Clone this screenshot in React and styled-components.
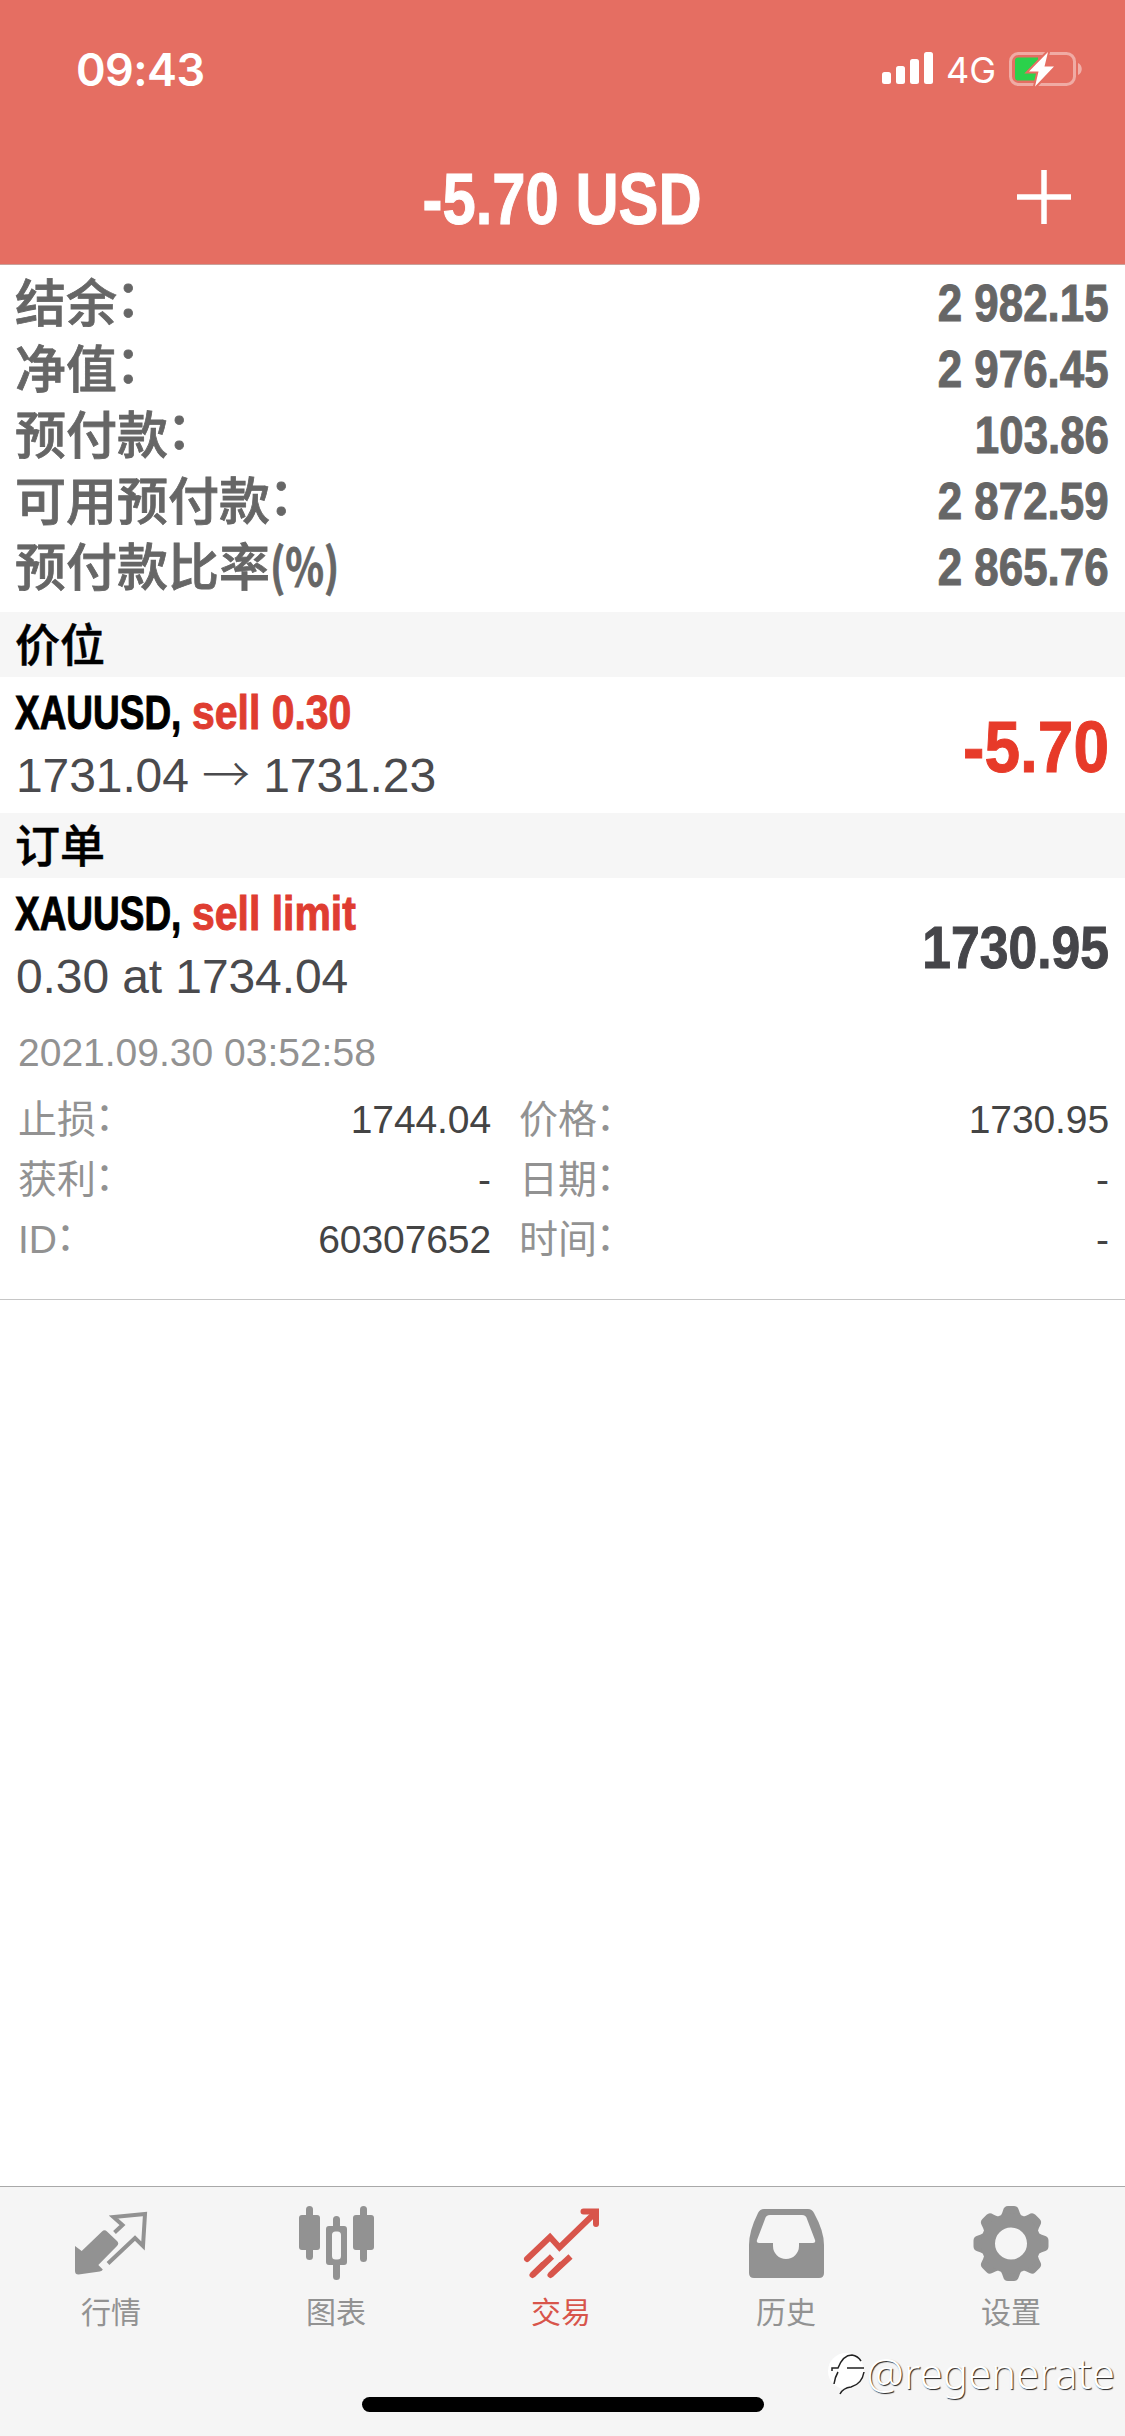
import React from 'react';
import styled, { createGlobalStyle } from 'styled-components';

const sans = "'Liberation Sans', 'Noto Sans CJK SC', sans-serif";
const cjk = "'Noto Sans CJK SC', sans-serif";
const system = "Inter, 'Noto Sans CJK SC', sans-serif";

const GlobalStyle = createGlobalStyle`
  body {
    margin: 0;
    background: #fff;
  }

  svg {
    display: block;
  }
`;

// Bold sans squeezed into a condensed face
const Condensed = styled.span`
  display: inline-block;
  font-weight: 700;
  white-space: nowrap;
  transform: scaleX(${({ $scale }) => $scale});
  transform-origin: ${({ $origin }) => $origin || 'left'} center;
  -webkit-text-stroke: 1px currentColor;
`;

const Screen = styled.div`
  position: relative;
  display: flex;
  flex-direction: column;
  width: 1125px;
  height: 2436px;
  overflow: hidden;
  background: #fff;
  font-family: ${sans};
`;

const Header = styled.header`
  display: flex;
  flex-direction: column;
  box-sizing: border-box;
  height: 265px;
  border-bottom: 1px solid #c9a19b;
  background: #e56e62;
  color: #fff;
`;

const StatusBar = styled.div`
  display: flex;
  align-items: center;
  justify-content: space-between;
  height: 132px;
  padding: 6px 42px 0 76px;
  box-sizing: border-box;
`;

const Clock = styled.span`
  font-family: ${system};
  font-size: 45px;
  font-weight: 600;
  letter-spacing: -0.6px;
`;

const Indicators = styled.div`
  display: flex;
  align-items: center;
`;

const Network = styled.span`
  margin: 2px 13px 0 12px;
  font-family: ${system};
  font-size: 36px;
`;

const NavBar = styled.div`
  display: grid;
  grid-template-columns: 1fr auto 1fr;
  align-items: center;
  height: 132px;
  padding: 0 53px;
`;

const NavTitle = styled.h1`
  grid-column: 2;
  margin: 0;
  padding-top: 3px;
  font-size: 72px;
  line-height: 129px;
`;

const AddButton = styled.button`
  justify-self: end;
  padding: 0;
  border: 0;
  background: none;
`;

const Summary = styled.dl`
  box-sizing: border-box;
  height: 347px;
  margin: 0;
  padding: 5px 16px 0 15px;
  color: #666;
`;

const SummaryRow = styled.div`
  display: flex;
  justify-content: space-between;
  height: 66px;
`;

const SummaryLabel = styled.dt`
  font-family: ${cjk};
  font-size: 51px;
  font-weight: 500;
  line-height: 61px;
  -webkit-text-stroke: 0.8px currentColor;
`;

const Colon = styled.span`
  margin-left: -0.03em;
  line-height: 1;
  vertical-align: 0.09em;
`;

const Unit = styled.span`
  display: inline-block;
  font-weight: 700;
  transform: scaleX(0.79);
  transform-origin: left center;
`;

const SummaryValue = styled.dd`
  margin: 0;
  font-size: 51px;
  line-height: 68px;
`;

const SectionTitle = styled.h2`
  height: 65px;
  margin: 0;
  padding: 0 15px;
  background: #f6f6f6;
  color: #000;
  font-family: ${cjk};
  font-size: 45px;
  font-weight: 500;
  line-height: 62px;
  -webkit-text-stroke: 0.5px currentColor;
`;

const Trade = styled.div`
  display: flex;
  align-items: center;
  justify-content: space-between;
  height: 136px;
  padding: 0 16px 0 15px;
`;

const Order = styled.div`
  display: grid;
  grid-template-columns: 177px auto;
  font-size: 48px;
  line-height: 62px;
`;

const Ticker = styled.span`
  color: #000;
`;

const Side = styled.span`
  color: #df3d31;
`;

const Price = styled.div`
  padding-left: 1px;
  color: #4a4a4d;
  font-size: 48px;
  letter-spacing: -0.1px;
  line-height: 64px;
`;

const Arrow = styled.span`
  font-family: ${cjk};
  font-weight: 300;
  line-height: 1;
`;

const Amount = styled.div`
  padding-top: 3px;
  color: ${({ $loss }) => ($loss ? '#e73a29' : '#454549')};
  font-size: ${({ $loss }) => ($loss ? 72 : 60)}px;
`;

const Details = styled.div`
  box-sizing: border-box;
  height: 286px;
  padding: 9px 16px 0 18px;
  border-bottom: 1px solid #c6c6c6;
  color: #929292;
  font-size: 39px;
`;

const OpenTime = styled.div`
  height: 67px;
  line-height: 60px;
`;

const DetailGrid = styled.div`
  display: grid;
  grid-template-columns: 473px 590px;
  column-gap: 28px;
`;

const Detail = styled.div`
  display: flex;
  justify-content: space-between;
  height: 60px;
  line-height: 60px;
`;

const DetailValue = styled.span`
  color: #444;
  letter-spacing: -0.1px;
`;

const TabBar = styled.nav`
  display: flex;
  box-sizing: border-box;
  height: 250px;
  margin-top: auto;
  border-top: 1px solid #a9a9a9;
  background: #f5f5f5;
`;

const Tab = styled.a`
  display: flex;
  flex: 1;
  flex-direction: column;
  align-items: center;
  padding: 16px 3px 0 0;
  color: ${({ $active }) => ($active ? '#d8554b' : '#929292')};
`;

const TabLabel = styled.span`
  margin-top: 7px;
  font-family: ${cjk};
  font-size: 30px;
  line-height: 40px;
`;

const HomeIndicator = styled.div`
  position: absolute;
  bottom: 24px;
  left: 362px;
  width: 402px;
  height: 15px;
  border-radius: 8px;
  background: #000;
`;

const Watermark = styled.div`
  position: absolute;
  right: 10px;
  bottom: 38px;
  display: flex;
  align-items: center;
  color: #fff;
  font-family: 'Noto Sans', sans-serif;
  font-size: 42px;
  font-weight: 300;
  line-height: 50px;
  text-shadow: 1px 1px 1px #222;
`;

const SignalIcon = () => (
  <svg width="52" height="34" viewBox="0 0 52 34" fill="#fff">
    <rect x="0" y="20" width="9" height="12" rx="2.5" />
    <rect x="14" y="14" width="9" height="18" rx="2.5" />
    <rect x="28" y="7" width="9" height="25" rx="2.5" />
    <rect x="42" y="0" width="9" height="32" rx="2.5" />
  </svg>
);

const BatteryIcon = () => (
  <svg width="74" height="36" viewBox="0 0 74 36">
    <rect x="1.5" y="2.5" width="64" height="31" rx="8" fill="none" stroke="#fff" strokeOpacity=".42" strokeWidth="3" />
    <path d="M69 12c5 2 5 10 0 12z" fill="#fff" fillOpacity=".45" />
    <path d="M9 6.500h20v23H9a3 3 0 0 1-3-3v-17a3 3 0 0 1 3-3z" fill="#2bd14b" />
    <path d="M39 1L20 20.500h9.500L26 35.500 45 15.500h-9.500z" fill="#fff" stroke="#e56e62" strokeWidth="4" paintOrder="stroke" />
  </svg>
);

const PlusIcon = () => (
  <svg width="56" height="56" viewBox="0 0 56 56" stroke="#fff" strokeWidth="5.5">
    <path d="M28 0v54M1 27h54" />
  </svg>
);

const QuotesIcon = () => (
  <svg width="80" height="80" viewBox="0 0 80 80" fill="currentColor">
    <path d="M4 43l6.700 5L31 28.500q2.500-2.500 5 0l10 9.500q2.500 2.500 0 5L27.300 62l4.500 4.500q-.5 1.500-3 2L7.500 71.500Q4 71.500 4 68z" />
    <path d="M43.500 29.500l8-7.500-9-8L74 11l-2 32-8-8-27 25.500" fill="none" stroke="currentColor" strokeWidth="4" />
  </svg>
);

const ChartIcon = () => (
  <svg width="80" height="80" viewBox="0 0 80 80" fill="currentColor">
    <rect x="3" y="12" width="21" height="35" rx="3" />
    <rect x="10" y="3" width="7" height="54" rx="3.500" />
    <path fillRule="evenodd" d="M33 23h15a3 3 0 0 1 3 3v33a3 3 0 0 1-3 3H33a3 3 0 0 1-3-3V26a3 3 0 0 1 3-3zM39.500 28.500a3.500 3.500 0 0 0-3.500 3.500v21a3.500 3.500 0 0 0 3.500 3.500h2a3.500 3.500 0 0 0 3.500-3.500V32a3.500 3.500 0 0 0-3.500-3.500z" />
    <path d="M37 24v-7.500a3.500 3.500 0 0 1 7 0V24zM37 61v12.500a3.500 3.500 0 0 0 7 0V61z" />
    <rect x="57" y="12" width="21" height="35" rx="3" />
    <rect x="64" y="3" width="7" height="56" rx="3.500" />
  </svg>
);

const TradeIcon = () => (
  <svg width="80" height="80" viewBox="0 0 80 80" fill="none" stroke="currentColor" strokeWidth="6" strokeLinecap="round">
    <path d="M6 56l23-22 9.500 10.500L74 10" />
    <path d="M62.500 8.500H75V21" />
    <path d="M11.500 72l10-10M29.500 72l10-10" />
    <path d="M11.500 72l19.500-18.500M29.500 72L49.500 53.500" strokeLinecap="butt" />
  </svg>
);

const HistoryIcon = () => (
  <svg width="80" height="80" viewBox="0 0 80 80" fill="currentColor">
    <path
      fillRule="evenodd"
      d="M18 6h44q4 0 6 4 10 18 10 32v28q0 5-5 5H8q-5 0-5-5V42Q3 28 12 10q2-4 6-4zM24 12q-4 0-5 4L11 37q-1 3 2 3h14v3a13 13 0 0 0 26 0v-3h14q3 0 2-3l-8-21q-1-4-5-4z"
    />
  </svg>
);

const SettingsIcon = () => (
  <svg width="80" height="80" viewBox="0 0 80 80" fill="currentColor">
    <g transform="translate(40 40.500)">
      {[0, 45, 90, 135, 180, 225, 270, 315].map(angle => (
        <path key={angle} transform={`rotate(${angle})`} d="M-14-22Q-9-29-8-33Q-7-37.500-3-37.500h6q4 0 5 4.500Q9-29 14-22z" />
      ))}
      <path fillRule="evenodd" d="M0-30a30 30 0 1 1 0 60 30 30 0 1 1 0-60zM0-16a16 16 0 1 0 0 32 16 16 0 1 0 0-32z" />
    </g>
  </svg>
);

const WatermarkLogo = () => (
  <svg width="40" height="44" viewBox="0 0 40 44" fill="none">
    <circle cx="19" cy="20" r="18" fill="#fff" />
    <path d="M5 20V17h6q5-13 14-13 6 1 9 6M20 17h17M11 21q-3 5-4 12M37 21q-2 12-13 15-8 1-11 7" stroke="#222" strokeWidth="1.500" />
  </svg>
);

const summary = [
  { label: '结余', value: '2 982.15' },
  { label: '净值', value: '2 976.45' },
  { label: '预付款', value: '103.86' },
  { label: '可用预付款', value: '2 872.59' },
  { label: '预付款比率', unit: '(%)', value: '2 865.76' },
];

const details = [
  ['止损', '1744.04'],
  ['价格', '1730.95'],
  ['获利', '-'],
  ['日期', '-'],
  ['ID', '60307652'],
  ['时间', '-'],
];

const tabs = [
  ['行情', QuotesIcon],
  ['图表', ChartIcon],
  ['交易', TradeIcon],
  ['历史', HistoryIcon],
  ['设置', SettingsIcon],
];

const OrderLine = ({ symbol, side }) => (
  <Order>
    <Ticker><Condensed $scale={0.77}>{`${symbol},`}</Condensed></Ticker>
    <Side><Condensed $scale={0.853}>{side}</Condensed></Side>
  </Order>
);

const App = () => (
  <Screen>
    <GlobalStyle />
    <Header>
      <StatusBar>
        <Clock>09:43</Clock>
        <Indicators>
          <SignalIcon />
          <Network>4G</Network>
          <BatteryIcon />
        </Indicators>
      </StatusBar>
      <NavBar>
        <NavTitle>
          <Condensed $scale={0.83} $origin="center">-5.70 USD</Condensed>
        </NavTitle>
        <AddButton>
          <PlusIcon />
        </AddButton>
      </NavBar>
    </Header>

    <Summary>
      {summary.map(({ label, unit, value }) => (
        <SummaryRow key={label}>
          <SummaryLabel>
            {label}
            {unit ? <Unit>{unit}</Unit> : <Colon>：</Colon>}
          </SummaryLabel>
          <SummaryValue>
            <Condensed $scale={0.86} $origin="right">{value}</Condensed>
          </SummaryValue>
        </SummaryRow>
      ))}
    </Summary>

    <SectionTitle>价位</SectionTitle>
    <Trade>
      <div>
        <OrderLine symbol="XAUUSD" side="sell 0.30" />
        <Price>1731.04 <Arrow>→</Arrow> 1731.23</Price>
      </div>
      <Amount $loss>
        <Condensed $scale={0.89} $origin="right">-5.70</Condensed>
      </Amount>
    </Trade>

    <SectionTitle>订单</SectionTitle>
    <Trade>
      <div>
        <OrderLine symbol="XAUUSD" side="sell limit" />
        <Price>0.30 at 1734.04</Price>
      </div>
      <Amount>
        <Condensed $scale={0.86} $origin="right">1730.95</Condensed>
      </Amount>
    </Trade>
    <Details>
      <OpenTime>2021.09.30 03:52:58</OpenTime>
      <DetailGrid>
        {details.map(([label, value]) => (
          <Detail key={label}>
            <span>{label}<Colon>：</Colon></span>
            <DetailValue>{value}</DetailValue>
          </Detail>
        ))}
      </DetailGrid>
    </Details>

    <TabBar>
      {tabs.map(([label, Icon]) => (
        <Tab key={label} $active={label === '交易'}>
          <Icon />
          <TabLabel>{label}</TabLabel>
        </Tab>
      ))}
    </TabBar>
    <Watermark>
      <WatermarkLogo />
      @regenerate
    </Watermark>
    <HomeIndicator />
  </Screen>
);

export default App;
